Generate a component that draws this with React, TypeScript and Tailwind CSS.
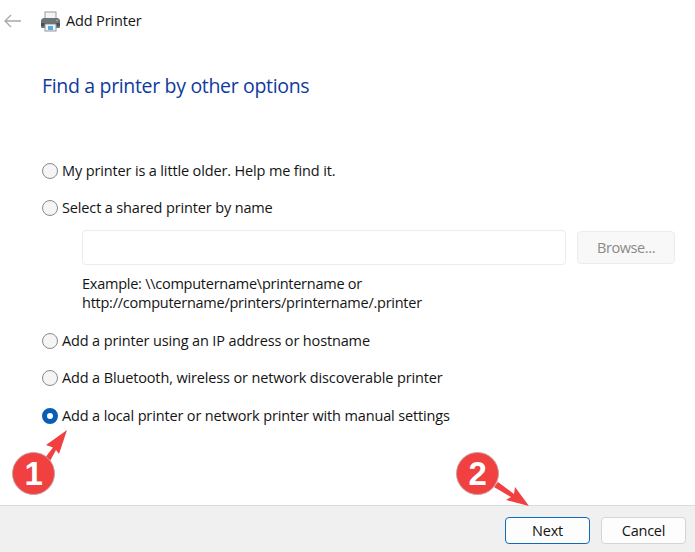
import React from 'react';

const PrinterIcon = () => (
  <svg width="21" height="21" viewBox="0 0 21 21">
    <rect x="5" y="1" width="11" height="7" fill="#f4f4f4" stroke="#9a9a9a" />
    <path d="M3 7h15l2 2v7a1 1 0 0 1-1 1H2a1 1 0 0 1-1-1V9z" fill="#6f7478" />
    <rect x="1" y="12" width="19" height="3" fill="#4a4f53" />
    <rect x="16" y="9" width="2" height="1" fill="#7fc97f" />
    <rect x="5" y="13" width="11" height="7" fill="#eef5fa" stroke="#8a9aa5" />
    <rect x="8" y="15" width="5" height="4" fill="#5fa8d8" />
  </svg>
);

const Radio = ({ checked }: { checked?: boolean }) =>
  checked ? (
    <span className="w-4 h-4 shrink-0 rounded-full border-[5px] border-[#0a5db5] bg-white" />
  ) : (
    <span className="w-4 h-4 shrink-0 rounded-full border border-[#8a8a8a] bg-[#f5f5f5]" />
  );

const Option = ({ label, checked, className }: { label: string; checked?: boolean; className?: string }) => (
  <div className={`flex items-center h-5 gap-1 ${className ?? ''}`}>
    <Radio checked={checked} />
    <span className="tracking-[-0.14px]">{label}</span>
  </div>
);

const Badge = ({ n, className }: { n: string; className: string }) => (
  <div className={`absolute w-[43px] h-[43px] rounded-full bg-[#f04040] border border-[#c9a0a0] flex items-center justify-center text-white text-[33px] font-bold font-['Liberation_Sans',sans-serif] ${className}`}>
    {n}
  </div>
);

export default function App() {
  return (
    <div className="relative w-[695px] h-[552px] flex flex-col bg-white text-[#141414] text-[14.5px] overflow-hidden font-['Open_Sans',sans-serif] tracking-[-0.25px]">
      <div className="flex items-center h-[42px] pl-1">
        <svg width="17" height="14" viewBox="0 0 17 14" fill="none" stroke="#a8a8a8" strokeWidth="1.3">
          <path d="M17 7H1M7 1 1 7l6 6" />
        </svg>
        <div className="ml-[19px]">
          <PrinterIcon />
        </div>
        <span className="ml-[5px] tracking-[-0.15px]">Add Printer</span>
      </div>

      <h1 className="ml-[42px] mt-[30px] h-7 leading-7 text-[19.5px] tracking-[-0.33px] text-[#0f3a9e]">Find a printer by other options</h1>

      <div className="flex flex-col pl-[42px] mt-[61px] flex-1">
        <Option label="My printer is a little older. Help me find it." />
        <Option label="Select a shared printer by name" className="mt-[17px]" />
        <div className="flex items-center gap-[11px] ml-10 mt-[12px] pr-5">
          <div className="w-[484px] h-[35px] border border-[#ececec] rounded-sm bg-white" />
          <div className="w-[98px] h-[33px] rounded bg-[#f8f8f8] border border-[#ececec] flex items-center justify-center text-[#8a8a8a] tracking-[-0.4px]">
            Browse...
          </div>
        </div>
        <div className="ml-10 mt-[9px] leading-[19px]">
          <div>Example: \\computername\printername or</div>
          <div>http://computername/printers/printername/.printer</div>
        </div>
        <Option label="Add a printer using an IP address or hostname" className="mt-[19px]" />
        <Option label="Add a Bluetooth, wireless or network discoverable printer" className="mt-[17px]" />
        <Option label="Add a local printer or network printer with manual settings" checked className="mt-[18px]" />
      </div>

      <div className="h-[47px] bg-[#f0f0f0] border-t border-[#dcdcdc] flex items-start justify-end gap-[11px] pt-[11px] pr-[9px]">
        <div className="w-[85px] h-[27px] rounded bg-[#fdfdfd] border border-[#0f6cbd] flex items-center justify-center">Next</div>
        <div className="w-[85px] h-[27px] rounded bg-[#fdfdfd] border border-[#d5d5d5] flex items-center justify-center">Cancel</div>
      </div>

      {/* annotations */}
      <svg className="absolute left-0 top-0 pointer-events-none" width="695" height="552" fill="#f04040">
        <path d="M67 430 L46 445 L53 447.5 L44 459 L50 461 L56 450 L59 454 Z" />
        <path d="M529 506 L515 487 L514 494 L498 482 L494 487 L511 497 L506 500 Z" />
      </svg>
      <Badge n="1" className="left-[12px] top-[452px]" />
      <Badge n="2" className="left-[456px] top-[452px]" />
    </div>
  );
}
